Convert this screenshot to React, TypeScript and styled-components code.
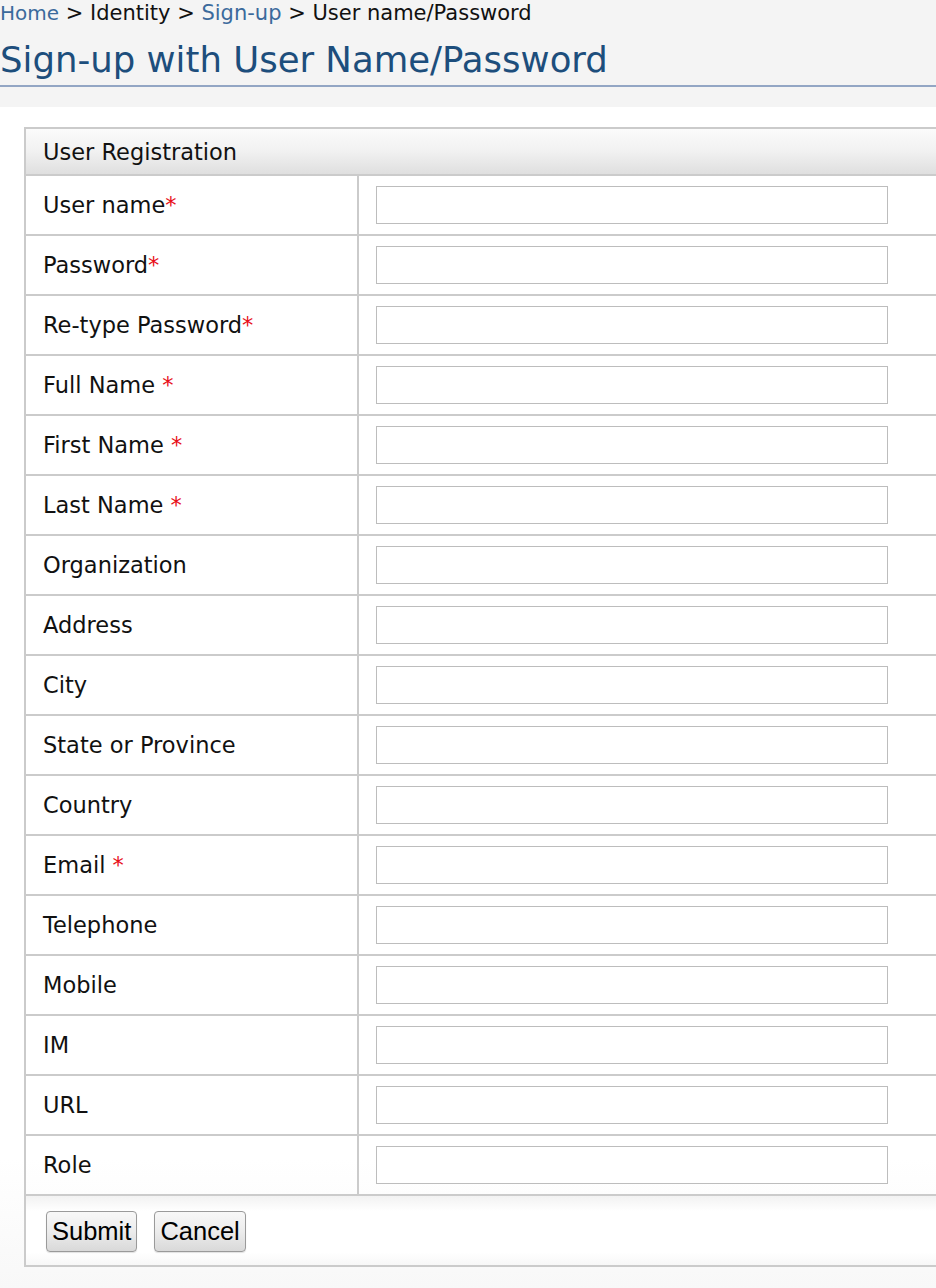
import React from "react";
import styled, { createGlobalStyle } from "styled-components";

const Global = createGlobalStyle`
  html, body { margin: 0; padding: 0; overflow-x: hidden; }
  body {
    background: #ffffff;
    font-family: "DejaVu Sans", "Liberation Sans", sans-serif;
    color: #111;
  }
`;

const Page = styled.div`
  width: 100%;
  min-height: 1288px;
  overflow: hidden;
  background: linear-gradient(to bottom, #ffffff 0%, #ffffff 90%, #f8f8f8 100%);
`;

const TopBar = styled.header`
  background: #f4f4f4;
  height: 107px;
  overflow: hidden;
`;

const Breadcrumb = styled.nav`
  font-size: 21px;
  line-height: 26px;
  white-space: nowrap;
  color: #111;
`;

const Crumb = styled.a<{ $small?: boolean }>`
  color: #3b6a9c;
  text-decoration: none;
  font-size: ${(p) => (p.$small ? "20px" : "21px")};
`;

const Title = styled.h1`
  margin: 1px 0 0 0;
  padding-top: 8px;
  font-weight: normal;
  font-size: 35.5px;
  line-height: 50px;
  color: #1d4e7c;
  white-space: nowrap;
  border-bottom: 2px solid #93a6c4;
  height: 60px;
  box-sizing: border-box;
`;

const Content = styled.main`
  padding: 20px 0 0 24px;
  overflow: hidden;
`;

const Table = styled.div`
  width: 960px;
  border: 2px solid #cbcbcb;
  font-size: 22.5px;
`;

const HeaderRow = styled.div`
  height: 45px;
  display: flex;
  align-items: center;
  padding-left: 17px;
  background: linear-gradient(to bottom, #fbfbfb 0%, #f1f1f1 50%, #dfdfdf 100%);
  border-bottom: 2px solid #cbcbcb;
`;

const Row = styled.div`
  display: grid;
  grid-template-columns: 331px 2px 1fr;
  height: 58px;
  border-bottom: 2px solid #cbcbcb;
`;

const Label = styled.label`
  display: flex;
  align-items: center;
  padding-left: 17px;
  white-space: pre;
`;

const Divider = styled.div`
  background: #cbcbcb;
`;

const Field = styled.div`
  display: flex;
  align-items: center;
  padding-left: 17px;
`;

const Input = styled.input`
  width: 512px;
  height: 38px;
  box-sizing: border-box;
  border: 1px solid #bdbdbd;
  background: #fff;
  margin: 0;
  padding: 0 4px;
`;

const Req = styled.span`
  color: #e8101a;
`;

const Footer = styled.div`
  height: 69px;
  display: flex;
  align-items: flex-start;
  gap: 17px;
  padding: 15px 0 0 20px;
  box-sizing: border-box;
  background: linear-gradient(to bottom, #f2f2f2 0%, #ffffff 22%, #ffffff 82%, #f7f7f7 100%);
`;

const Button = styled.button`
  height: 41px;
  padding: 0 5px;
  font-family: "Liberation Sans", Arial, sans-serif;
  font-size: 25.5px;
  color: #000;
  border: 1px solid #9a9a9a;
  border-radius: 4px;
  background: linear-gradient(to bottom, #f8f8f8 0%, #ececec 50%, #d9d9d9 100%);
  box-shadow: 0 1px 1px rgba(0, 0, 0, 0.12);
  cursor: pointer;
`;

type F = { label: string; req?: "tight" | "space" };

const fields: F[] = [
  { label: "User name", req: "tight" },
  { label: "Password", req: "tight" },
  { label: "Re-type Password", req: "tight" },
  { label: "Full Name", req: "space" },
  { label: "First Name", req: "space" },
  { label: "Last Name", req: "space" },
  { label: "Organization" },
  { label: "Address" },
  { label: "City" },
  { label: "State or Province" },
  { label: "Country" },
  { label: "Email", req: "space" },
  { label: "Telephone" },
  { label: "Mobile" },
  { label: "IM" },
  { label: "URL" },
  { label: "Role" },
];

export default function App() {
  return (
    <Page>
      <Global />
      <TopBar>
        <Breadcrumb>
          <Crumb href="#" $small>Home</Crumb> &gt; Identity &gt; <Crumb href="#">Sign-up</Crumb> &gt; User name/Password
        </Breadcrumb>
        <Title>Sign-up with User Name/Password</Title>
      </TopBar>
      <Content>
        <Table>
          <HeaderRow>User Registration</HeaderRow>
          {fields.map((f) => (
            <Row key={f.label}>
              <Label>
                {f.label}
                {f.req === "space" ? " " : ""}
                {f.req ? <Req>*</Req> : null}
              </Label>
              <Divider />
              <Field>
                <Input type={f.label.includes("Password") ? "password" : "text"} />
              </Field>
            </Row>
          ))}
          <Footer>
            <Button type="submit">Submit</Button>
            <Button type="button">Cancel</Button>
          </Footer>
        </Table>
      </Content>
    </Page>
  );
}
